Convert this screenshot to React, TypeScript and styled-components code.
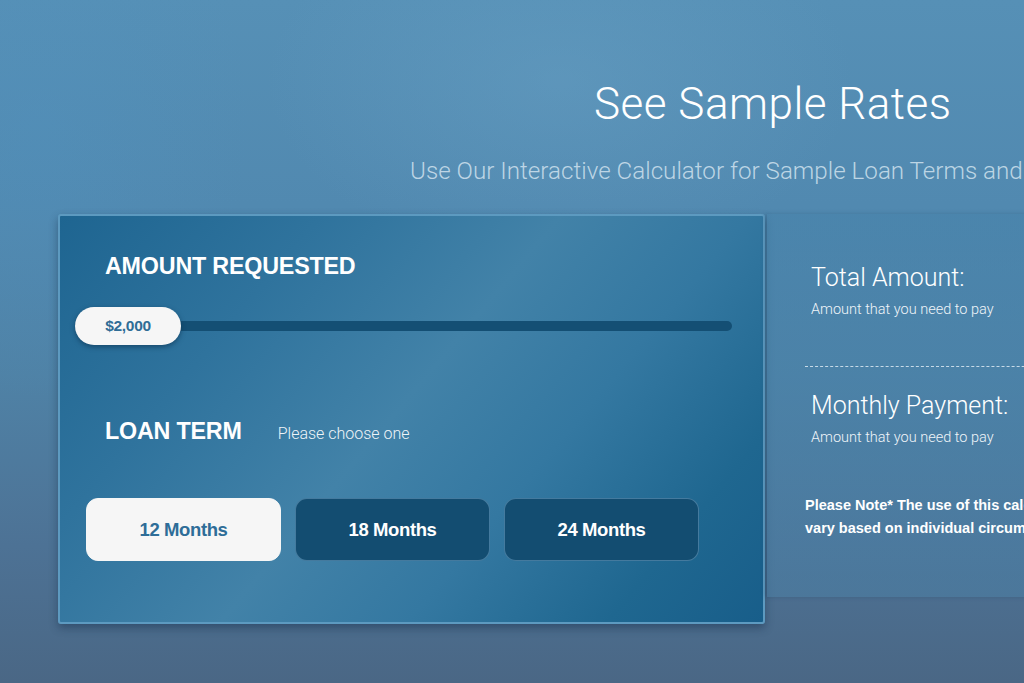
import React from "react";
import styled, { createGlobalStyle } from "styled-components";

const GlobalStyle = createGlobalStyle`
  html, body {
    margin: 0;
    padding: 0;
    width: 1024px;
    height: 683px;
    overflow: hidden;
  }
  body {
    font-family: "Liberation Sans", Arial, sans-serif;
    background: #4f82a8;
  }
  * { box-sizing: border-box; }
`;

const Page = styled.div`
  position: relative;
  width: 1024px;
  height: 683px;
  overflow: hidden;
  background:
    radial-gradient(ellipse 420px 260px at 560px 80px, rgba(110, 165, 200, 0.35), transparent 70%),
    radial-gradient(ellipse 300px 400px at 40px 120px, rgba(80, 145, 190, 0.35), transparent 70%),
    linear-gradient(180deg, #5690b6 0%, #5189b0 30%, #4f82a6 55%, #4d7295 80%, #4a6785 100%);
`;

const Header = styled.header`
  display: flex;
  flex-direction: column;
  align-items: flex-start;
  padding-top: 78px;
`;

const Title = styled.h1`
  margin: 0 0 0 594px;
  font-family: Roboto, "Liberation Sans", sans-serif;
  font-weight: 300;
  font-size: 44px;
  letter-spacing: 0.5px;
  line-height: 52px;
  color: #ffffff;
  white-space: nowrap;
`;

const Subtitle = styled.p`
  margin: 26px 0 0 410px;
  font-family: Roboto, "Liberation Sans", sans-serif;
  font-weight: 300;
  font-size: 24.2px;
  line-height: 30px;
  color: rgba(220, 234, 244, 0.78);
  white-space: nowrap;
`;

const Main = styled.main`
  display: flex;
  align-items: flex-start;
  gap: 2px;
  padding-left: 58px;
  margin-top: 28px;
  width: 1400px;
`;

const Card = styled.section`
  flex: 0 0 707px;
  height: 410px;
  border: 2px solid #5d9ac0;
  border-radius: 3px;
  background: linear-gradient(
    130deg,
    #1e6591 0%,
    #2f739d 25%,
    #4282a8 48%,
    #3478a1 66%,
    #1f6790 85%,
    #185e8a 100%
  );
  box-shadow: 0 4px 8px rgba(20, 45, 70, 0.45);
  display: flex;
  flex-direction: column;
  padding: 37px 0 0 0;
`;

const SectionTitle = styled.h2`
  margin: 0;
  font-family: "Liberation Sans", Arial, sans-serif;
  font-weight: 700;
  font-size: 23.3px;
  line-height: 27px;
  color: #ffffff;
  letter-spacing: -0.2px;
`;

const TitleRow = styled.div`
  display: flex;
  align-items: baseline;
  gap: 36px;
  padding-left: 45px;
`;

const Hint = styled.span`
  font-family: Roboto, "Liberation Sans", sans-serif;
  font-weight: 300;
  font-size: 16px;
  color: #eef4f8;
`;

const Slider = styled.div`
  position: relative;
  margin: 27px 0 0 15px;
  width: 657px;
  height: 38px;
  display: flex;
  align-items: center;
`;

const Track = styled.div`
  width: 100%;
  height: 10px;
  border-radius: 5px;
  background: #144f74;
`;

const Thumb = styled.div`
  position: absolute;
  left: 0;
  top: 0;
  width: 106px;
  height: 38px;
  border-radius: 19px;
  background: #f6f6f6;
  box-shadow: 0 2px 5px rgba(12, 50, 80, 0.6);
  display: flex;
  align-items: center;
  justify-content: center;
  font-family: "Liberation Sans", Arial, sans-serif;
  font-weight: 700;
  font-size: 15.5px;
  letter-spacing: -0.3px;
  color: #2f6d96;
`;

const TermBlock = styled.div`
  margin-top: 73px;
`;

const Options = styled.div`
  display: flex;
  gap: 14px;
  padding-left: 26px;
  margin-top: 53px;
`;

const Option = styled.button<{ $active?: boolean }>`
  width: 195px;
  height: 63px;
  border-radius: 12px;
  border: 1px solid ${(p) => (p.$active ? "#f6f6f6" : "rgba(110, 160, 195, 0.55)")};
  background: ${(p) => (p.$active ? "#f6f6f6" : "#134d71")};
  color: ${(p) => (p.$active ? "#2e6d98" : "#ffffff")};
  font-family: "Liberation Sans", Arial, sans-serif;
  font-weight: 700;
  font-size: 18.5px;
  letter-spacing: -0.4px;
  cursor: pointer;
  padding: 0;
`;

const Summary = styled.aside`
  flex: 0 0 320px;
  height: 383px;
  background: linear-gradient(180deg, rgba(70, 130, 170, 0.55) 0%, rgba(75, 130, 168, 0.45) 100%);
  box-shadow: -2px 0 4px rgba(20, 60, 90, 0.25);
  padding: 48px 0 0 38px;
  display: flex;
  flex-direction: column;
`;

const Figure = styled.div`
  padding-left: 6px;
`;

const FigureLabel = styled.div`
  font-family: Roboto, "Liberation Sans", sans-serif;
  font-weight: 300;
  font-size: 25px;
  line-height: 32px;
  color: #ffffff;
  white-space: nowrap;
`;

const FigureSub = styled.div`
  font-family: Roboto, "Liberation Sans", sans-serif;
  font-weight: 300;
  font-size: 14.5px;
  line-height: 18px;
  margin-top: 7px;
  color: #f0f5f9;
  white-space: nowrap;
`;

const Divider = styled.hr`
  margin: 47px 0 23px 0;
  border: 0;
  border-top: 1px dashed rgba(230, 240, 248, 0.8);
  width: 260px;
`;

const Note = styled.p`
  margin: 47px 0 0 0;
  font-family: "Liberation Sans", Arial, sans-serif;
  font-weight: 700;
  font-size: 14.5px;
  line-height: 23px;
  color: #ffffff;
  white-space: nowrap;
`;

export default function App() {
  return (
    <>
      <GlobalStyle />
      <Page>
        <Header>
          <Title>See Sample Rates</Title>
          <Subtitle>Use Our Interactive Calculator for Sample Loan Terms and</Subtitle>
        </Header>
        <Main>
          <Card>
            <TitleRow>
              <SectionTitle>AMOUNT REQUESTED</SectionTitle>
            </TitleRow>
            <Slider>
              <Track />
              <Thumb>$2,000</Thumb>
            </Slider>
            <TermBlock>
              <TitleRow>
                <SectionTitle>LOAN TERM</SectionTitle>
                <Hint>Please choose one</Hint>
              </TitleRow>
            </TermBlock>
            <Options>
              <Option $active>12 Months</Option>
              <Option>18 Months</Option>
              <Option>24 Months</Option>
            </Options>
          </Card>
          <Summary>
            <Figure>
              <FigureLabel>Total Amount:</FigureLabel>
              <FigureSub>Amount that you need to pay</FigureSub>
            </Figure>
            <Divider />
            <Figure>
              <FigureLabel>Monthly Payment:</FigureLabel>
              <FigureSub>Amount that you need to pay</FigureSub>
            </Figure>
            <Note>
              Please Note* The use of this calculator is for illustration purposes only.
              <br />
              vary based on individual circumstances.
            </Note>
          </Summary>
        </Main>
      </Page>
    </>
  );
}
